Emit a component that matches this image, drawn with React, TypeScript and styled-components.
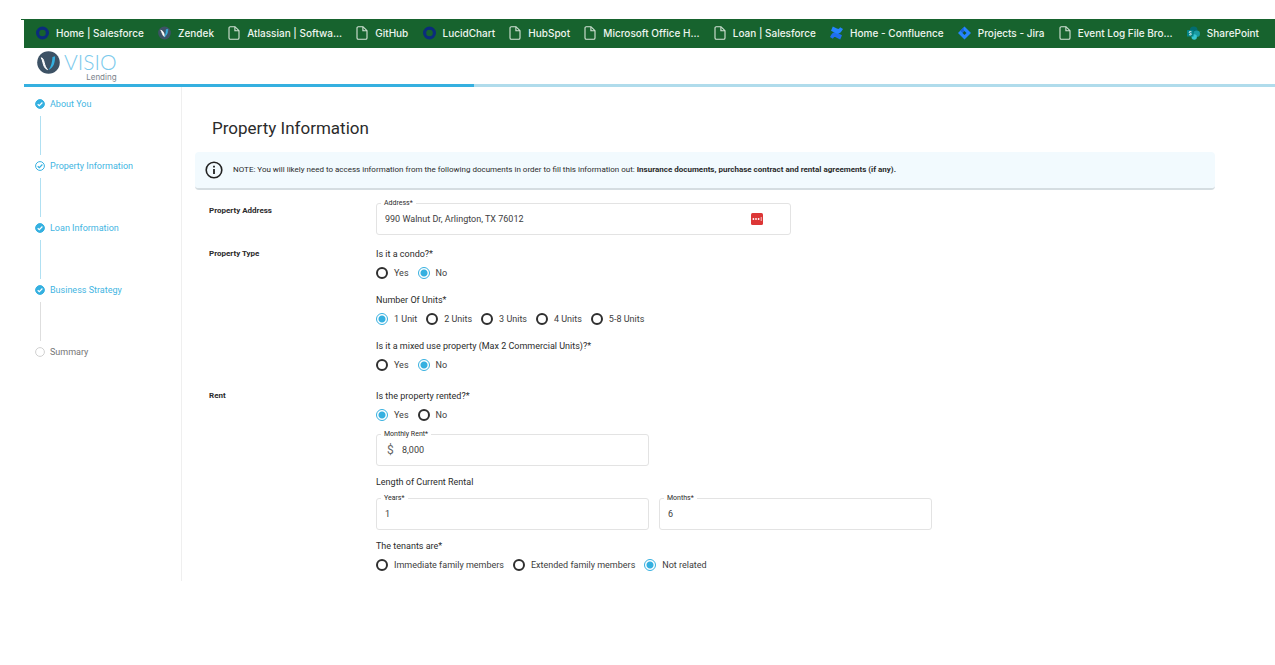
import React, { useId, useState } from "react";
import styled, { createGlobalStyle } from "styled-components";

const blue = "#35b0e0";

const GlobalStyle = createGlobalStyle`
  *, *::before, *::after { box-sizing: border-box; }
  body {
    margin: 0;
    background: #fff;
    color: #2b2b2b;
    font-family: Roboto, "Liberation Sans", sans-serif;
    font-size: 9px;
    line-height: 16px;
  }
`;

const Page = styled.div`
  padding: 19px 0 0 24px;
`;

const BookmarkBar = styled.nav`
  position: relative;
  display: flex;
  align-items: center;
  justify-content: space-between;
  height: 29px;
  padding: 0 16px 2px 12px;
  background: #17632e;
  &::before {
    content: "";
    position: absolute;
    left: -3px;
    top: 0;
    width: 3px;
    height: 1px;
    background: #17632e;
  }
`;

const Bookmark = styled.a`
  display: flex;
  align-items: center;
  gap: 7px;
  color: #eef5ef;
  font: 500 10px/16px Inter, "Liberation Sans", sans-serif;
  text-decoration: none;
  white-space: nowrap;
  svg { flex: none; }
`;

const Header = styled.header`
  display: flex;
  align-items: flex-start;
  height: 36px;
  padding: 3px 13px 0;
`;

const Brand = styled.a`
  display: flex;
  gap: 4px;
  text-decoration: none;
`;

const BrandText = styled.span`
  display: flex;
  flex-direction: column;
  align-items: flex-end;
`;

const BrandName = styled.span`
  color: #79c9ec;
  font: 300 21px/22px Lato, "Liberation Sans", sans-serif;
`;

const BrandSub = styled.span`
  color: #7b838b;
  font: 400 8px/8px Inter, "Liberation Sans", sans-serif;
`;

const Progress = styled.div`
  height: 3px;
  background: #b0dcec;
`;

const ProgressFill = styled.div`
  height: 100%;
  background: ${blue};
`;

const Body = styled.div`
  display: flex;
`;

const Sidebar = styled.aside`
  flex: none;
  width: 158px;
  padding: 9px 0 0 11px;
  border-right: 1px solid #efefef;
`;

const Steps = styled.ol`
  margin: 0;
  padding: 0;
  list-style: none;
`;

const Step = styled.li<{ $line?: string }>`
  display: flex;
  flex-direction: column;
  &:not(:last-child)::after {
    content: "";
    width: 1px;
    height: 39px;
    margin: 4px 0 3px 5px;
    background: ${(p) => p.$line};
  }
`;

const StepLink = styled.a<{ $muted: boolean }>`
  display: flex;
  align-items: center;
  gap: 5px;
  color: ${(p) => (p.$muted ? "#757575" : "#43b5e2")};
  text-decoration: none;
`;

const Main = styled.main`
  flex: 1;
  min-width: 0;
  padding: 29px 60px 8px 13px;
`;

const Title = styled.h1`
  margin: 0 0 12px 17px;
  font-size: 17px;
  line-height: 24px;
  font-weight: 400;
`;

const Note = styled.div`
  display: flex;
  align-items: center;
  gap: 10px;
  min-height: 38px;
  padding: 0 10px;
  border-bottom: 2px solid #d5dde1;
  border-radius: 4px;
  background: #f2fafe;
  font-size: 8px;
  line-height: 12px;
  svg { flex: none; }
`;

const Form = styled.form`
  display: flex;
  flex-direction: column;
  padding: 13px 0 0 14px;
`;

const Section = styled.section<{ $gap?: number }>`
  display: grid;
  grid-template-columns: 167px 1fr;
  margin-bottom: ${(p) => p.$gap ?? 0}px;
`;

const SectionTitle = styled.h2`
  margin: 0;
  font-size: 8px;
  line-height: 16px;
  font-weight: 700;
`;

const Stack = styled.div`
  display: flex;
  flex-direction: column;
  gap: 11px;
`;

const RentalBlock = styled.div`
  display: flex;
  flex-direction: column;
  gap: 8px;
`;

const Group = styled.fieldset`
  margin: 0;
  padding: 0;
  border: 0;
  min-width: 0;
`;

const Question = styled.legend`
  padding: 0;
  margin-bottom: 3px;
`;

const Subheading = styled.div`
  line-height: 16px;
`;

const Options = styled.div`
  display: flex;
  flex-wrap: wrap;
  gap: 9px;
`;

const Option = styled.label`
  display: flex;
  align-items: center;
  gap: 6px;
  color: #3d3d3d;
`;

const Radio = styled.input`
  appearance: none;
  width: 12px;
  height: 12px;
  margin: 0;
  border: 2px solid #2f2f2f;
  border-radius: 50%;
  &:checked {
    border: 1px solid ${blue};
    background: radial-gradient(circle, ${blue} 3px, transparent 4px);
  }
`;

const FieldBox = styled.div<{ $wide?: boolean }>`
  position: relative;
  display: flex;
  align-items: center;
  width: 100%;
  max-width: ${(p) => (p.$wide ? 415 : 273)}px;
  height: 32px;
  padding: 0 27px 0 8px;
  border: 1px solid #e3e3e3;
  border-radius: 3px;
`;

const FieldLabel = styled.label`
  position: absolute;
  left: 4px;
  top: -6px;
  padding: 0 3px;
  background: #fff;
  font-size: 7px;
  line-height: 10px;
`;

const TextInput = styled.input`
  flex: 1;
  min-width: 0;
  padding: 0;
  border: 0;
  outline: 0;
  background: transparent;
  color: #3d3d3d;
  font: inherit;
`;

const Currency = styled.span`
  width: 17px;
  padding-left: 2px;
  color: #666;
  font-size: 12px;
`;

const FillButton = styled.button`
  display: flex;
  padding: 0;
  border: 0;
  background: none;
`;

const FieldRow = styled.div`
  display: flex;
  gap: 10px;
`;

const icons: Record<string, React.ReactNode> = {
  ring: (
    <svg width="13" height="14" viewBox="0 0 13 14">
      <circle cx="6.5" cy="7" r="4.9" fill="none" stroke="#0b2c7c" strokeWidth="3.2" />
    </svg>
  ),
  visio: (
    <svg width="13" height="14" viewBox="0 0 13 14">
      <circle cx="6.5" cy="7" r="6.4" fill="#3d5265" />
      <path d="M2.7 4.1c1 .7 1.500 5.200 3.800 6.700-.3-2.200-.3-5.300-3.800-6.700z" fill="#fff" stroke="#fff" strokeWidth=".7" />
      <path d="M9.800 3.300c-.1 2.800-.8 6-3.200 7.500 1.300-1.800 1.600-5 1.700-7.200z" fill="#35b0e0" stroke="#35b0e0" strokeWidth=".7" />
    </svg>
  ),
  file: (
    <svg width="12" height="14" viewBox="0 0 12 14" fill="none" stroke="#d5e4d8" strokeWidth="1.100">
      <path d="M2.300.7h4.700l4 4v7.300a1.300 1.300 0 0 1-1.300 1.300H2.300A1.300 1.300 0 0 1 1 12V2A1.300 1.300 0 0 1 2.300.7z" />
      <path d="M6.900.9v3.900h4" />
    </svg>
  ),
  confluence: (
    <svg width="13" height="14" viewBox="0 0 13 14">
      <path d="M0 10.900C2.500 6.200 4.500 5.500 7.700 7.100l4.300 2.100-1.800 4.200-4.100-2C4.300 10.600 3.900 11 2.900 12.700z" fill="#1f6fee" />
      <path d="M13 3.100C10.500 7.800 8.500 8.500 5.300 6.900L1 4.800 2.800.6l4.100 2c1.800.8 2.200.4 3.200-1.300z" fill="#2684ff" />
    </svg>
  ),
  jira: (
    <svg width="13" height="14" viewBox="0 0 13 14">
      <path d="M6.500.5 13 7l-6.500 6.500L0 7z" fill="#2684ff" />
      <path d="M6.500.5c-1.300 1.500-1.300 3 0 4.500L4.500 7 2.200 4.800z" fill="#1862d8" />
      <path d="M6.500 5 8.500 7l-2 2-2-2z" fill="#12542f" />
    </svg>
  ),
  sharepoint: (
    <svg width="13" height="14" viewBox="0 0 13 14">
      <circle cx="6.700" cy="4.500" r="3.900" fill="#036c70" />
      <circle cx="9.700" cy="7.700" r="3.300" fill="#1a9ba1" />
      <circle cx="7.200" cy="11" r="2.700" fill="#37c6d0" />
      <rect x="0" y="4" width="6.500" height="6.500" rx=".6" fill="#038387" />
      <path d="M4.500 5.800c-1-.6-2.400-.4-2.300.5.1 1 2.200.7 2.200 1.800 0 .9-1.400 1-2.400.4" fill="none" stroke="#fff" strokeWidth=".9" />
    </svg>
  ),
};

const bookmarks: [string, string][] = [
  ["ring", "Home | Salesforce"],
  ["visio", "Zendek"],
  ["file", "Atlassian | Softwa..."],
  ["file", "GitHub"],
  ["ring", "LucidChart"],
  ["file", "HubSpot"],
  ["file", "Microsoft Office H..."],
  ["file", "Loan | Salesforce"],
  ["confluence", "Home - Confluence"],
  ["jira", "Projects - Jira"],
  ["file", "Event Log File Bro..."],
  ["sharepoint", "SharePoint"],
];

type StepState = "done" | "current" | "todo";

const steps: { name: string; state: StepState; line?: string }[] = [
  { name: "About You", state: "done", line: "#b0e0f2" },
  { name: "Property Information", state: "current", line: "#b0e0f2" },
  { name: "Loan Information", state: "done", line: "#b0e0f2" },
  { name: "Business Strategy", state: "done", line: "#dedede" },
  { name: "Summary", state: "todo" },
];

function StepIcon({ state }: { state: StepState }) {
  const stroke = state === "todo" ? "#d0d0d0" : blue;
  return (
    <svg width="10" height="10" viewBox="0 0 10 10" fill="none">
      <circle cx="5" cy="5" r="4.400" stroke={stroke} strokeWidth="1" fill={state === "done" ? blue : "none"} />
      {state !== "todo" && (
        <path d="M2.700 5.200 4.300 6.700 7.400 3.500" stroke={state === "done" ? "#fff" : blue} strokeWidth="1.200" />
      )}
    </svg>
  );
}

function RadioGroup({ question, options, initial }: { question: string; options: string[]; initial: string }) {
  const name = useId();
  const [value, setValue] = useState(initial);
  return (
    <Group>
      <Question>{question}</Question>
      <Options>
        {options.map((o) => (
          <Option key={o}>
            <Radio type="radio" name={name} checked={value === o} onChange={() => setValue(o)} />
            {o}
          </Option>
        ))}
      </Options>
    </Group>
  );
}

interface FieldProps {
  label: string;
  value: string;
  wide?: boolean;
  prefix?: string;
  children?: React.ReactNode;
}

function Field({ label, value, wide, prefix, children }: FieldProps) {
  const id = useId();
  return (
    <FieldBox $wide={wide}>
      <FieldLabel htmlFor={id}>{label}</FieldLabel>
      {prefix && <Currency>{prefix}</Currency>}
      <TextInput id={id} type="text" defaultValue={value} />
      {children}
    </FieldBox>
  );
}

export default function App() {
  return (
    <Page>
      <GlobalStyle />
      <BookmarkBar aria-label="Bookmarks">
        {bookmarks.map(([icon, name]) => (
          <Bookmark key={name} href="#">
            {icons[icon]}
            {name}
          </Bookmark>
        ))}
      </BookmarkBar>
      <Header>
        <Brand href="#">
          <svg width="23" height="23" viewBox="0 0 23 23" aria-hidden="true">
            <circle cx="11.500" cy="11.500" r="11.300" fill="#3d5265" />
            <path d="M4.200 6.800c1.800.2 2.400 2.200 3 4.700.6 2.600 1.300 5 3.300 7.100-2.900-1.200-3.800-3.900-4.500-6.800-.5-2.100-.8-3.700-1.800-5z" fill="#fff" stroke="#fff" strokeWidth="1" />
            <path d="M18.100 5.300c0 6.200-1.300 11.600-6.700 13.800 2.900-3.300 3.800-8.200 4.100-13z" fill="#35b0e0" />
          </svg>
          <BrandText>
            <BrandName>VISIO</BrandName>
            <BrandSub>Lending</BrandSub>
          </BrandText>
        </Brand>
      </Header>
      <Progress role="progressbar" aria-label="Application progress" aria-valuenow={36} aria-valuemin={0} aria-valuemax={100}>
        <ProgressFill style={{ width: "36%" }} />
      </Progress>
      <Body>
        <Sidebar>
          <Steps>
            {steps.map((s) => (
              <Step key={s.name} $line={s.line}>
                <StepLink href="#" $muted={s.state === "todo"}>
                  <StepIcon state={s.state} />
                  {s.name}
                </StepLink>
              </Step>
            ))}
          </Steps>
        </Sidebar>
        <Main>
          <Title>Property Information</Title>
          <Note>
            <svg width="18" height="18" viewBox="0 0 18 18" fill="none" stroke="#222">
              <circle cx="9" cy="9" r="7.800" strokeWidth="1.600" />
              <path d="M9 8v5M9 4.800v1.700" strokeWidth="1.800" />
            </svg>
            <span>
              NOTE: You will likely need to access information from the following documents in order to fill this
              information out: <b>Insurance documents, purchase contract and rental agreements (if any).</b>
            </span>
          </Note>
          <Form>
            <Section $gap={11}>
              <SectionTitle>Property Address</SectionTitle>
              <Field label="Address*" value="990 Walnut Dr, Arlington, TX 76012" wide>
                <FillButton type="button" aria-label="Fill from password manager">
                  <svg width="12" height="12" viewBox="0 0 12 12">
                    <rect width="12" height="12" rx="1.500" fill="#dc3636" />
                    <g fill="#fff">
                      <circle cx="2.400" cy="6" r=".9" />
                      <circle cx="5" cy="6" r=".9" />
                      <circle cx="7.600" cy="6" r=".9" />
                      <rect x="9.800" y="4" width=".7" height="4" />
                    </g>
                  </svg>
                </FillButton>
              </Field>
            </Section>
            <Section $gap={15}>
              <SectionTitle>Property Type</SectionTitle>
              <Stack>
                <RadioGroup question="Is it a condo?*" options={["Yes", "No"]} initial="No" />
                <RadioGroup
                  question="Number Of Units*"
                  options={["1 Unit", "2 Units", "3 Units", "4 Units", "5-8 Units"]}
                  initial="1 Unit"
                />
                <RadioGroup
                  question="Is it a mixed use property (Max 2 Commercial Units)?*"
                  options={["Yes", "No"]}
                  initial="No"
                />
              </Stack>
            </Section>
            <Section>
              <SectionTitle>Rent</SectionTitle>
              <Stack>
                <RadioGroup question="Is the property rented?*" options={["Yes", "No"]} initial="Yes" />
                <RentalBlock>
                  <Field label="Monthly Rent*" value="8,000" prefix="$" />
                  <Subheading>Length of Current Rental</Subheading>
                  <FieldRow>
                    <Field label="Years*" value="1" />
                    <Field label="Months*" value="6" />
                  </FieldRow>
                  <RadioGroup
                    question="The tenants are*"
                    options={["Immediate family members", "Extended family members", "Not related"]}
                    initial="Not related"
                  />
                </RentalBlock>
              </Stack>
            </Section>
          </Form>
        </Main>
      </Body>
    </Page>
  );
}
